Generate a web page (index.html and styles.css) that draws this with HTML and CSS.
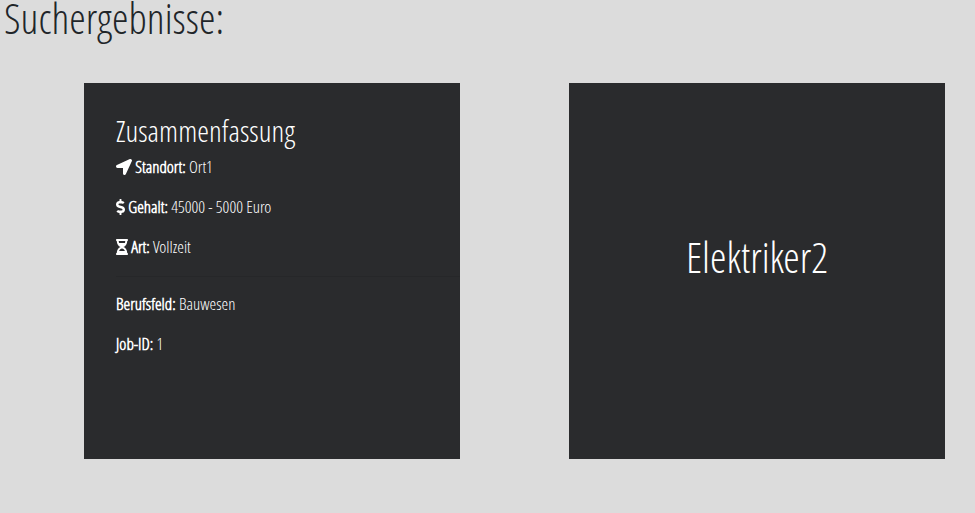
FILE: index.html
```html
<!DOCTYPE html>
<html lang="de">
<head>
<meta charset="utf-8">
<meta name="viewport" content="width=device-width, initial-scale=1">
<title>Suchergebnisse</title>
<link rel="stylesheet" href="styles.css">
</head>
<body>
<h1 class="page-title">Suchergebnisse:</h1>
<main class="results">
  <article class="card">
    <h2 class="card-title">Zusammenfassung</h2>
    <p class="fact"><svg class="icon" viewBox="0 0 512 512" width="16" height="16" aria-hidden="true"><path d="M444.500 3.500L28.700 195.400c-48 22.400-32 92.800 19.200 92.800h175.900v175.900c0 51.200 70.400 67.200 92.800 19.200l191.900-415.800c16-38.400-25.600-80-64-64z"/></svg> <strong>Standort:</strong> Ort1</p>
    <p class="fact"><svg class="icon" viewBox="0 0 288 512" width="9" height="16" aria-hidden="true"><path d="M209.200 233.400l-108-31.600C88.700 198.200 80 186.500 80 173.500c0-16.300 13.200-29.500 29.500-29.500h66.300c12.200 0 24.200 3.700 34.200 10.500 6.100 4.100 14.300 3.100 19.500-2l34.800-34c7.100-6.900 6.100-18.400-1.800-24.500C238 74.800 207.400 64.100 176 64V16c0-8.800-7.200-16-16-16h-32c-8.800 0-16 7.200-16 16v48h-2.500C45.800 64-5.400 118.700.5 183.600c4.200 46.100 39.400 83.600 83.800 96.600l102.500 30c12.500 3.700 21.200 15.300 21.200 28.300 0 16.300-13.200 29.500-29.500 29.500h-66.300C100 368 88 364.300 78 357.500c-6.100-4.100-14.300-3.100-19.500 2l-34.800 34c-7.100 6.900-6.100 18.400 1.800 24.500 24.500 19.200 55.100 29.900 86.500 30v48c0 8.800 7.200 16 16 16h32c8.800 0 16-7.200 16-16v-48.200c46.600-.9 90.300-28.600 105.700-72.700 21.500-61.600-14.600-124.800-72.500-141.700z"/></svg> <strong>Gehalt:</strong> 45000 - 5000 Euro</p>
    <p class="fact"><svg class="icon" viewBox="0 0 384 512" width="12" height="16" aria-hidden="true"><path d="M360 0H24C10.700 0 0 10.700 0 24v16c0 13.300 10.700 24 24 24 0 91 51 167.700 120.800 192C75 280.300 24 357 24 448c-13.300 0-24 10.700-24 24v16c0 13.300 10.700 24 24 24h336c13.300 0 24-10.700 24-24v-16c0-13.300-10.700-24-24-24 0-91-51-167.700-120.800-192C309 231.700 360 155 360 64c13.300 0 24-10.700 24-24V24c0-13.300-10.700-24-24-24zm-75 384H99c17-46.500 52.200-80 93-80s76 33.500 93 80zm0-256H99c-7.200-19.600-11-41.500-11-64h208c0 22.700-3.800 44.500-11 64z"/></svg> <strong>Art:</strong> Vollzeit</p>
    <hr class="divider">
    <p class="fact"><strong>Berufsfeld:</strong> Bauwesen</p>
    <p class="fact"><strong>Job-ID:</strong> 1</p>
  </article>
  <article class="card card-cover">
    <h2 class="cover-title">Elektriker2</h2>
  </article>
</main>
</body>
</html>
```
FILE: styles.css
```css
* {
  box-sizing: border-box;
}

body {
  margin: 0;
  background: #dcdcdc;
  color: #212529;
  font-family: "Open Sans Condensed Light", "Roboto Condensed", sans-serif;
  font-size: 17px;
  font-weight: 300;
  line-height: 22px;
}

h1,
h2,
p {
  margin: 0;
}

strong {
  font-weight: 700;
}

.page-title {
  padding-left: 4px;
  font-size: 42px;
  font-weight: 300;
  line-height: 36px;
}

.results {
  display: grid;
  grid-template-columns: 1fr 1fr;
  gap: 109px;
  padding: 47px 30px 54px 84px;
}

.card {
  aspect-ratio: 1;
  padding: 32px 0 32px 32px;
  background: #2a2b2d;
  color: #fff;
}

.card-title {
  margin-bottom: 9px;
  font-size: 30px;
  font-weight: 300;
  line-height: 32px;
}

.fact {
  margin-bottom: 18px;
}

.icon {
  fill: currentColor;
  vertical-align: -2px;
}

.divider {
  margin: 18px 0 16px;
  border: 0;
  border-top: 1px solid #262729;
}

.card-cover {
  display: flex;
  align-items: center;
  justify-content: center;
  padding: 0;
}

.cover-title {
  padding-bottom: 28px;
  font-size: 42px;
  font-weight: 300;
  line-height: 48px;
}
```
